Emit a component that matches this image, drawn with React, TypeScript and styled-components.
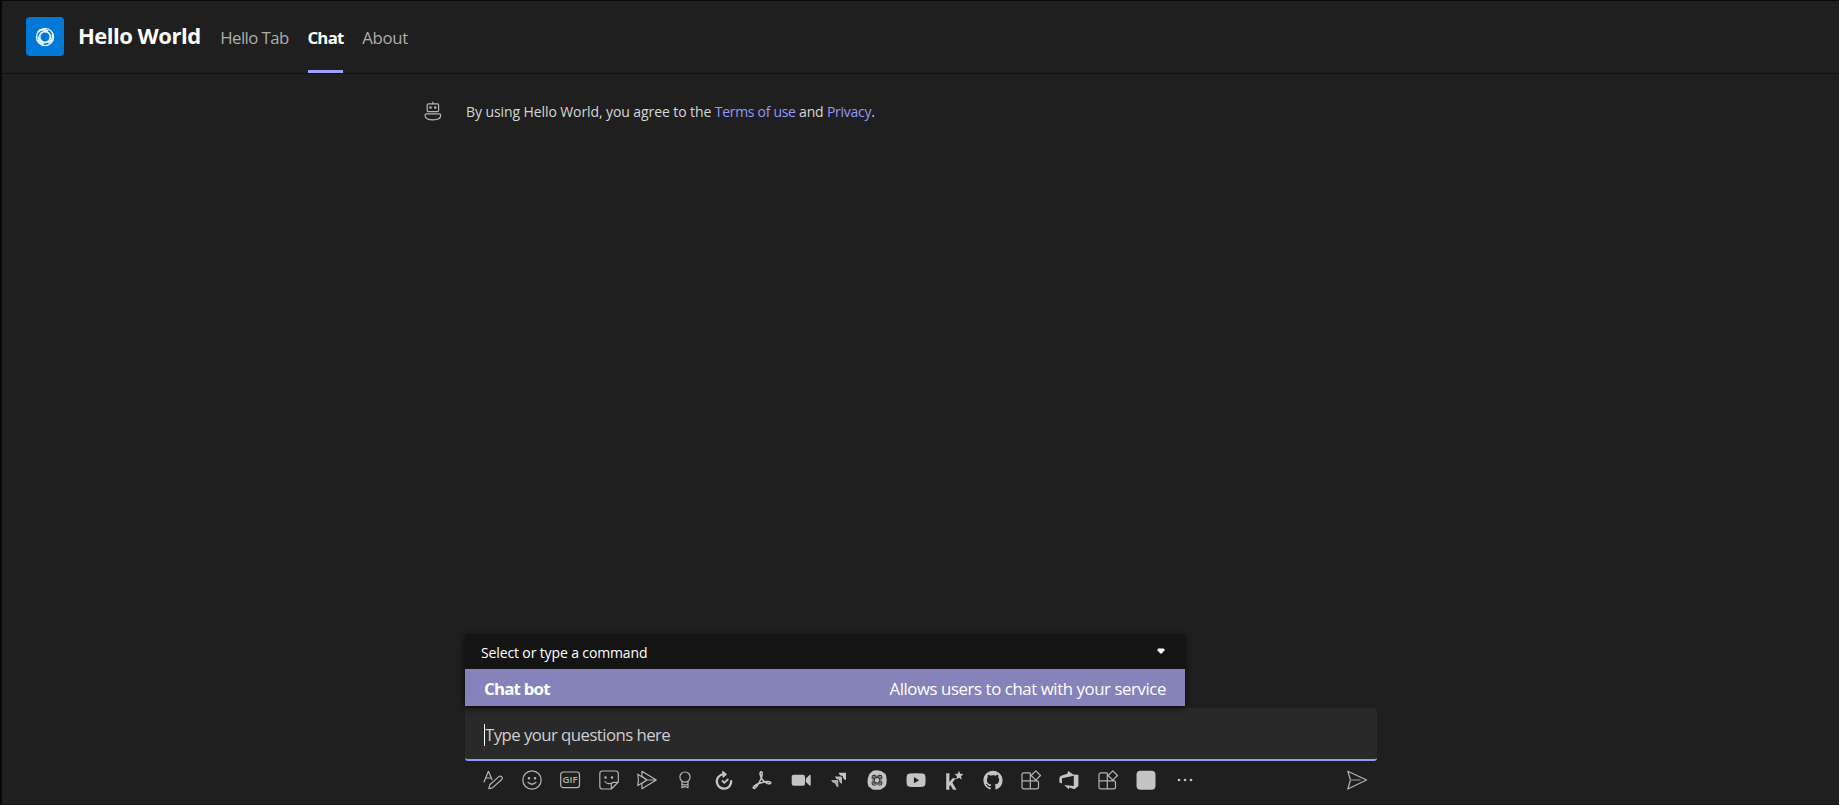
import React from 'react';
import styled, { createGlobalStyle } from 'styled-components';

const GlobalStyle = createGlobalStyle`
  * { box-sizing: border-box; }
  html, body { margin: 0; background: #1f1f1f; overflow: hidden; }
  body { font-family: "Open Sans", "Noto Sans", sans-serif; }
`;

const Page = styled.div`
  display: flex;
  flex-direction: column;
  width: 1839px;
  height: 805px;
  background: #1f1f1f;
  border-top: 1px solid #080808;
  border-left: 2px solid #080808;
  border-bottom: 1px solid #171717;
`;

const Header = styled.header`
  display: flex;
  height: 73px;
  padding-left: 24px;
  border-bottom: 1px solid #111;
`;

const Logo = styled.div`
  display: flex;
  align-items: center;
  justify-content: center;
  width: 38px;
  height: 39px;
  margin-top: 16px;
  border-radius: 4px;
  background: #0078d7;
`;

const Line = styled.span<{ $size: number; $spacing: number; $weight?: number; $color?: string }>`
  font-size: ${p => p.$size}px;
  letter-spacing: ${p => p.$spacing}px;
  font-weight: ${p => p.$weight ?? 400};
  color: ${p => p.$color ?? '#fff'};
  line-height: 24px;
  white-space: pre;
`;

const Title = styled.h1`
  width: 142px;
  margin: 22px 0 0 14px;
  line-height: 24px;
  display: flex;
`;

const Tab = styled.div<{ $width: number; $active?: boolean }>`
  width: ${p => p.$width}px;
  height: 72px;
  padding-top: 25px;
  margin-right: 19px;
  display: flex;
  justify-content: center;
  border-bottom: 3px solid ${p => (p.$active ? '#9ea2ff' : 'transparent')};
`;

const Conversation = styled.main`
  flex: 1;
  display: flex;
  align-items: flex-start;
  padding: 26px 0 0 421px;
`;

const Notice = styled.p`
  margin: 0 0 0 23px;
  line-height: 24px;
  display: flex;
`;

const Composer = styled.section`
  width: 912px;
  margin-left: 463px;
`;

const CommandMenu = styled.div`
  position: relative;
  width: 720px;
  height: 72px;
  border-radius: 2px;
  background: #141414;
  box-shadow: 0 2px 7px rgba(0, 0, 0, 0.65);
`;

const MenuHead = styled.div`
  display: flex;
  align-items: center;
  justify-content: space-between;
  height: 35px;
  padding: 2px 20px 0 16px;
`;

const MenuItem = styled.div`
  display: flex;
  align-items: center;
  justify-content: space-between;
  height: 37px;
  padding: 2px 19px 0 19px;
  background: #8583b9;
`;

const Input = styled.div`
  display: flex;
  height: 53px;
  margin-top: 2px;
  padding: 15px 0 0 19px;
  border-radius: 3px;
  border-bottom: 2px solid #9299f7;
  background: #292929;
`;

const Caret = styled.i`
  width: 1px;
  height: 22px;
  margin-top: 1px;
  background: #fff;
`;

const Toolbar = styled.div`
  display: flex;
  align-items: center;
  height: 43px;
  padding: 0 0.5px 5px 9.2px;
`;

const Tool = styled.span`
  display: flex;
  justify-content: center;
  width: 38.41px;
`;

const SendTool = styled(Tool)`
  margin-left: auto;
`;

const Glyph = styled.svg<{ $solid?: boolean }>`
  display: block;
  width: 20px;
  height: 20px;
  fill: ${p => (p.$solid ? '#c4c4c4' : 'none')};
  stroke: ${p => (p.$solid ? 'none' : '#b4b4b4')};
  stroke-width: 1.2;
  stroke-linejoin: round;
  stroke-linecap: round;
  overflow: visible;
`;

const RobotGlyph = styled(Glyph)`
  margin-top: 1px;
`;

const GlyphText = styled.text`
  font: 600 9.2px "Open Sans", sans-serif;
  fill: #b4b4b4;
  stroke: none;
`;

const Icon = ({ solid, children }: { solid?: boolean; children: React.ReactNode }) => (
  <Tool><Glyph $solid={solid} viewBox="0 0 20 20">{children}</Glyph></Tool>
);

const AppsIcon = () => (
  <Icon>
    <path d="M9 2.8H3Q1 2.8 1 4.8V17Q1 18.9 3 18.9H15.6Q17.5 18.9 17.5 17V12.5Q17.5 10.8 15.8 10.8H1M9.3 3V18.9M14.8 .8 19.5 5.5 14.8 10.2 10.1 5.5Z" />
  </Icon>
);

const Robot = () => (
  <RobotGlyph viewBox="0 0 20 20">
    <rect x="4.2" y="2.8" width="11.4" height="7.8" rx="1.2" />
    <path d="M9.9 2.7V1M3.4 12.8H16.4Q17.7 12.8 17.7 14.2C17.7 17.8 14 18.8 10 18.8S2 17.8 2 14.2Q2 12.8 3.4 12.8Z" />
    <circle cx="7.5" cy="6.5" r=".7" fill="#adadad" /><circle cx="12.3" cy="6.5" r=".7" fill="#adadad" />
  </RobotGlyph>
);

export default function App() {
  return (
    <>
      <GlobalStyle />
      <Page>
        <Header>
          <Logo>
            <svg width="20" height="20" viewBox="0 0 20 20" fill="none" stroke="#e6f3ff">
              <circle cx="10" cy="10" r="8.6" strokeWidth="1.3" />
              <circle cx="10" cy="10" r="5.4" strokeWidth="1.8" />
              <path d="M3 5.2C5 2.5 9.5 2 13 4.2M17.6 7C18.4 10 17 13.8 13.2 15.8M9 17.5C5.5 16.6 3.2 14 3.4 9.5" strokeWidth="2" />
            </svg>
          </Logo>
          <Title><Line $size={22} $weight={700} $spacing={-0.5}>Hello World</Line></Title>
          <Tab $width={69}><Line $size={16.8} $spacing={-0.55} $color="#adadad">Hello Tab</Line></Tab>
          <Tab $width={35} $active><Line $size={16.8} $weight={700} $spacing={-0.75}>Chat</Line></Tab>
          <Tab $width={46}><Line $size={16.8} $spacing={-0.3} $color="#adadad">About</Line></Tab>
        </Header>

        <Conversation>
          <Robot />
          <Notice>
            <Line $size={14} $spacing={-0.09} $color="#d6d6d6">{'By using Hello World, you agree to the '}</Line>
            <Line $size={14} $spacing={-0.3} $color="#9299f7">Terms of use</Line>
            <Line $size={14} $spacing={-0.2} $color="#d6d6d6">{' and '}</Line>
            <Line $size={14} $spacing={-0.25} $color="#9299f7">Privacy</Line>
            <Line $size={14} $spacing={-0.1} $color="#d6d6d6">.</Line>
          </Notice>
        </Conversation>

        <Composer>
          <CommandMenu>
            <MenuHead>
              <Line $size={14} $spacing={-0.13}>Select or type a command</Line>
              <svg width="8" height="6" viewBox="0 0 8 6" style={{ marginBottom: 4 }}>
                <path d="M1.5.5H6.5Q7.8.6 7.5 2.2L5.2 5Q4 6 2.8 5L.5 2.2Q.2.6 1.5.5Z" fill="#fff" />
              </svg>
            </MenuHead>
            <MenuItem>
              <Line $size={16.8} $weight={700} $spacing={-0.75}>Chat bot</Line>
              <Line $size={16.8} $spacing={-0.41}>Allows users to chat with your service</Line>
            </MenuItem>
          </CommandMenu>
          <Input>
            <Caret />
            <Line $size={16.8} $spacing={-0.56} $color="#cfcfcf">Type your questions here</Line>
          </Input>
          <Toolbar>
            <Icon>
              <path d="M1 12 5.4 1.3 9 9.5M2.6 8H8M5.8 18.7 6.8 14.8 15.9 6.6Q17.4 5.4 18.7 6.7 20 8.1 18.8 9.5L9.4 17.9Z" />
            </Icon>
            <Icon>
              <circle cx="10" cy="10" r="9.2" />
              <circle cx="7" cy="8.3" r=".65" fill="#adadad" /><circle cx="13" cy="8.3" r=".65" fill="#adadad" />
              <path d="M6 12.3Q10 16.2 14 12.3" />
            </Icon>
            <Icon>
              <rect x=".7" y="2" width="18.8" height="15.6" rx="2.6" />
              <GlyphText x="2.5" y="13.1" textLength="15" lengthAdjust="spacingAndGlyphs">GIF</GlyphText>
            </Icon>
            <Icon>
              <path d="M3.5 1H16.5Q19.3 1 19.3 3.8V12L12.3 19H3.5Q.8 19 .8 16.2V3.8Q.8 1 3.5 1ZM12.3 18.8V14.5Q12.3 12.5 14.5 12.3H19.1M6 11.5Q8 14.4 11.3 13.4" />
              <circle cx="6.5" cy="7.5" r=".65" fill="#adadad" /><circle cx="13" cy="7.5" r=".65" fill="#adadad" />
            </Icon>
            <Icon>
              <path d="M5 1.3 19.3 10 5 18.8 4.8 13.5M5 1.3 4.8 6.2M.8 4.2 10 10 .8 15.6 1.4 10ZM8.8 10H19M4.8 6.2 10 9.8M4.8 13.5 10 10" />
            </Icon>
            <Icon>
              <circle cx="10" cy="7.1" r="5.1" />
              <path d="M7 11.5V17.8L10 16.4 13 17.8V11.5M7 14.2Q10 15.4 13 14.2" />
            </Icon>
            <Icon>
              <path d="M8 4.5A7.2 7.2 0 1 0 17.2 11.2" strokeWidth="2.3" stroke="#c4c4c4" />
              <path d="M8.7 1.5 12.2 4.3 9.2 7Z" strokeWidth="1.2" stroke="#c4c4c4" fill="#c4c4c4" />
              <path d="M8.5 11 10.3 12.8 13.8 9.5" strokeWidth="1.8" stroke="#c4c4c4" />
            </Icon>
            <Icon>
              <path d="M9.2 1.8C7.2 1.8 8 7 11.2 10.5 14.5 14.2 18.7 14.4 18.8 12.8 18.9 10.8 12 11.3 6.8 13.6 2.8 15.3.5 17.3 1.5 18.2 3 19.6 6.8 13.8 8.7 9.5 10.3 5.9 10.9 1.8 9.2 1.8Z" strokeWidth="1.6" stroke="#c4c4c4" />
            </Icon>
            <Icon solid>
              <rect x=".7" y="4.8" width="13.3" height="11" rx="2" />
              <path d="M14.8 8.7 18.5 5Q19.7 4.3 19.7 5.5V15Q19.7 16.3 18.5 15.5L14.8 12Z" />
            </Icon>
            <Icon solid>
              <path d="M9.6 2.8H17V10.2Q13.8 9.2 13.8 6 10.6 6 9.6 2.8Z" />
              <path d="M5.9 6.4H12Q13 6.4 13 7.4V13.7Q10.1 12.7 10 9.7 6.9 9.5 5.9 6.4Z" opacity=".9" />
              <path d="M2.2 10.1H8.3Q9.3 10.1 9.3 11.1V17.4Q6.4 16.4 6.2 13.4 3.2 13.2 2.2 10.1Z" opacity=".85" />
            </Icon>
            <Icon solid>
              <path d="M6 .7Q10-.2 14.5 1.2L18.5 4Q19.7 7 19.7 10.5 19.7 14 18.2 16.6L14 19.5Q9.5 20 5.5 19.4L1.5 16.3Q0 12.8.7 8.7L2.5 3.7Z" />
              <g fill="none" stroke="#333" strokeWidth="1.1">
                <circle cx="10" cy="10.2" r="2.8" />
                <path d="M5.2 8.5V7Q5.2 5.4 6.8 5.4H8.3M11.7 5.4H13.2Q14.8 5.4 14.8 7V8.5M14.8 11.9V13.4Q14.8 15 13.2 15H11.7M8.3 15H6.8Q5.2 15 5.2 13.4V11.9" />
                <path d="M7 6.8Q10 5.2 13 6.8M13.4 7.2Q15 10.2 13.4 13.2M13 13.6Q10 15.2 7 13.6M6.6 13.2Q5 10.2 6.6 7.2" strokeWidth=".8" />
              </g>
            </Icon>
            <Icon solid>
              <path fillRule="evenodd" d="M3.5 3.5Q10 3 16.7 3.5 19.2 3.7 19.4 6.3 19.8 10 19.4 14 19.2 16.6 16.7 16.8 10 17.3 3.5 16.8.9 16.6.7 14 .3 10 .7 6.3.9 3.7 3.5 3.5ZM7.9 7V13.3L13.1 10.2Z" />
            </Icon>
            <Icon solid>
              <path d="M2.2 3.3H5.4V12L8.6 8.2H12L8.4 12.6 12.5 19.7H9.1L6.4 14.9 5.4 16V19.7H2.2ZM15 .8 16.2 3.8 19.4 4.1 17 6.2 17.8 9.4 15 7.8 12.2 9.4 13 6.2 10.6 4.1 13.8 3.8Z" />
            </Icon>
            <Icon solid>
              <path transform="translate(.4 .7) scale(1.2)" d="M8 0C3.58 0 0 3.58 0 8c0 3.54 2.29 6.53 5.47 7.59.4.07.55-.17.55-.38 0-.19-.01-.82-.01-1.49-2.01.37-2.53-.49-2.69-.94-.09-.23-.48-.94-.82-1.13-.28-.15-.68-.52-.01-.53.63-.01 1.08.58 1.23.82.72 1.21 1.87.87 2.33.66.07-.52.28-.87.51-1.07-1.78-.2-3.64-.89-3.64-3.95 0-.87.31-1.59.82-2.15-.08-.2-.36-1.02.08-2.12 0 0 .67-.21 2.2.82.64-.18 1.32-.27 2-.27s1.36.09 2 .27c1.53-1.04 2.2-.82 2.2-.82.44 1.1.16 1.92.08 2.12.51.56.82 1.27.82 2.15 0 3.07-1.87 3.75-3.65 3.95.29.25.54.73.54 1.48 0 1.07-.01 1.93-.01 2.2 0 .21.15.46.55.38A8.01 8.01 0 0 0 16 8c0-4.42-3.58-8-8-8Z" />
            </Icon>
            <AppsIcon />
            <Icon solid>
              <path d="M.4 7.2 2.7 5.5 8.2 3.8 9.3 1 14.2 4.6 19.4 4.8V16L15.5 19.2 10 17.5V19.5L5.2 15 14.8 16V5.8L3 8.2V13.6L.4 12.6Z" />
            </Icon>
            <AppsIcon />
            <Icon solid>
              <rect x=".5" y=".8" width="19" height="19" rx="4" />
            </Icon>
            <Icon solid>
              <circle cx="4" cy="10" r="1.35" /><circle cx="10" cy="10" r="1.35" /><circle cx="16" cy="10" r="1.35" />
            </Icon>
            <SendTool>
              <Glyph viewBox="0 0 20 20">
                <path d="M.8 1.2 19.6 10 .8 19 3.5 10Z" />
                <path d="M3.5 10H13" strokeWidth="1.6" stroke="#777" />
              </Glyph>
            </SendTool>
          </Toolbar>
        </Composer>
      </Page>
    </>
  );
}
